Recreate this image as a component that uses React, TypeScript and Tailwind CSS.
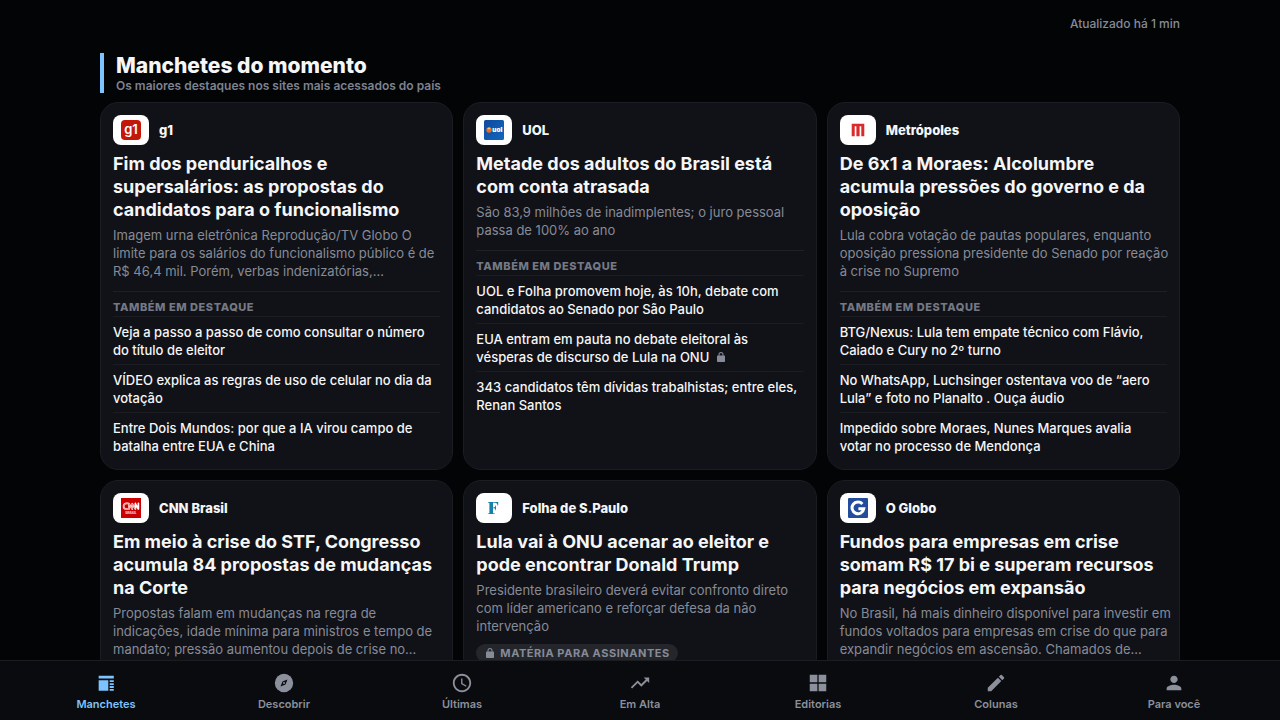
import type { ComponentType, ReactNode } from "react";
import { MdEdit, MdPerson, MdSchedule, MdTrendingUp } from "react-icons/md";

interface Headline {
  text: string;
  locked?: boolean;
}

interface Story {
  source: string;
  logo: ReactNode;
  title: string;
  summary: string;
  subscribersOnly?: boolean;
  related?: Headline[];
}

interface IconProps {
  className?: string;
}

function G1Logo() {
  return (
    <svg viewBox="0 0 20 20" className="size-5" aria-hidden="true">
      <rect width="20" height="20" rx="4" fill="#c4170c" />
      <text x="10" y="13.5" textAnchor="middle" fontFamily="Inter, sans-serif" fontSize="13" fontWeight="600" fill="#fff">
        g1
      </text>
    </svg>
  );
}

function UolLogo() {
  return (
    <svg viewBox="0 0 20 20" className="size-5" aria-hidden="true">
      <defs>
        <linearGradient id="uol-bg" x1="0" y1="0" x2="1" y2="1">
          <stop offset="0" stopColor="#0e4a9c" />
          <stop offset="1" stopColor="#1466bd" />
        </linearGradient>
      </defs>
      <rect width="20" height="20" rx="1.5" fill="url(#uol-bg)" />
      <circle cx="5" cy="10" r="2.7" fill="#ee6a24" />
      <path d="M3.2 9a2.7 2.7 0 0 1 3.4-1.1L5.4 9.6z" fill="#ffc178" />
      <text x="8.3" y="12.3" fontFamily="Inter, sans-serif" fontSize="6.4" fontWeight="900" fill="#fff">
        uol
      </text>
    </svg>
  );
}

function MetropolesLogo() {
  return (
    <svg viewBox="0 0 20 20" className="size-5" aria-hidden="true">
      <path d="M3.7 3.7h12.6v12.6h-3V6.2h-1.7v10.1H8.4V6.2H6.7v10.1h-3z" fill="#d92b2b" />
    </svg>
  );
}

function CnnLogo() {
  return (
    <svg viewBox="0 0 20 20" className="size-5" aria-hidden="true">
      <rect width="20" height="20" fill="#cc0000" />
      <g fill="none" strokeLinejoin="round" strokeLinecap="round">
        <path d="M7 5.4H5.4a2.8 2.8 0 0 0 0 5.6H8V5.6l3.2 5.4V5.6l3.2 5.4V5.4M17.4 5.4V11l-3-5" stroke="#fff" strokeWidth="1.7" />
        <path d="M7 5.4H5.4a2.8 2.8 0 0 0 0 5.6H8V5.6l3.2 5.4V5.6l3.2 5.4" stroke="#cc0000" strokeWidth=".4" />
      </g>
      <text x="10" y="16" textAnchor="middle" fontFamily="Inter, sans-serif" fontSize="3.2" fontWeight="600" fill="#fff">
        BRASIL
      </text>
    </svg>
  );
}

function FolhaLogo() {
  return (
    <svg viewBox="0 0 20 20" className="size-5" aria-hidden="true">
      <path d="M4 4h10.2v3.6h-.6c-.3-1.9-1-2.8-2.6-2.8H9v4.7h.7c1.1 0 1.6-.6 1.8-1.9h.5v4.6h-.5c-.2-1.4-.7-2-1.8-2H9v5l1.8.3v.6H4v-.6l1.4-.3V4.9L4 4.6z" fill="#1681a8" />
    </svg>
  );
}

function OGloboLogo() {
  return (
    <svg viewBox="0 0 20 20" className="size-5" aria-hidden="true">
      <rect width="20" height="20" rx="1" fill="#234c9c" />
      <path d="M14.4 5.9A5.9 5.9 0 1 0 15.8 10.8H10.4" fill="none" stroke="#fff" strokeWidth="3" />
    </svg>
  );
}

function HeadlinesIcon({ className }: IconProps) {
  return (
    <svg viewBox="0 0 24 24" fill="currentColor" className={className} aria-hidden="true">
      <path d="M4 4h16.5v3H4zM4 9h10.5v11.5H4zM16 9h4.5v2H16zM16 12.2h4.5v2H16zM16 15.4h4.5v2H16zM16 18.5h4.5v2H16z" />
    </svg>
  );
}

function CompassIcon({ className }: IconProps) {
  return (
    <svg viewBox="0 0 24 24" className={className} aria-hidden="true">
      <circle cx="12" cy="12" r="10" fill="currentColor" />
      <path d="M15.8 8.2l-2.2 5.4-5.4 2.2 2.2-5.4z" fill="#090b0e" />
      <circle cx="12" cy="12" r="1.1" fill="currentColor" />
    </svg>
  );
}

function SectionsIcon({ className }: IconProps) {
  return (
    <svg viewBox="0 0 24 24" fill="currentColor" className={className} aria-hidden="true">
      <path d="M3 3h8.3v8.3H3zM12.7 3H21v8.3h-8.3zM3 12.7h8.3V21H3zM12.7 12.7H21V21h-8.3z" />
    </svg>
  );
}

function LockIcon({ className }: IconProps) {
  return (
    <svg viewBox="0 0 24 24" fill="currentColor" className={className} aria-hidden="true">
      <path d="M18.5 9H17V7A5 5 0 0 0 7 7v2H5.5A1.5 1.5 0 0 0 4 10.5v10A1.5 1.5 0 0 0 5.5 22h13a1.5 1.5 0 0 0 1.5-1.5v-10A1.5 1.5 0 0 0 18.5 9zM9 9V7a3 3 0 0 1 6 0v2z" />
    </svg>
  );
}

const stories: Story[] = [
  {
    source: "g1",
    logo: <G1Logo />,
    title: "Fim dos penduricalhos e supersalários: as propostas do candidatos para o funcionalismo",
    summary:
      "Imagem urna eletrônica Reprodução/TV Globo O limite para os salários do funcionalismo público é de R$ 46,4 mil. Porém, verbas indenizatórias,...",
    related: [
      { text: "Veja a passo a passo de como consultar o número do título de eleitor" },
      { text: "VÍDEO explica as regras de uso de celular no dia da votação" },
      { text: "Entre Dois Mundos: por que a IA virou campo de batalha entre EUA e China" },
    ],
  },
  {
    source: "UOL",
    logo: <UolLogo />,
    title: "Metade dos adultos do Brasil está com conta atrasada",
    summary: "São 83,9 milhões de inadimplentes; o juro pessoal passa de 100% ao ano",
    related: [
      { text: "UOL e Folha promovem hoje, às 10h, debate com candidatos ao Senado por São Paulo" },
      { text: "EUA entram em pauta no debate eleitoral às vésperas de discurso de Lula na ONU", locked: true },
      { text: "343 candidatos têm dívidas trabalhistas; entre eles, Renan Santos" },
    ],
  },
  {
    source: "Metrópoles",
    logo: <MetropolesLogo />,
    title: "De 6x1 a Moraes: Alcolumbre acumula pressões do governo e da oposição",
    summary:
      "Lula cobra votação de pautas populares, enquanto oposição pressiona presidente do Senado por reação à crise no Supremo",
    related: [
      { text: "BTG/Nexus: Lula tem empate técnico com Flávio, Caiado e Cury no 2º turno" },
      { text: "No WhatsApp, Luchsinger ostentava voo de “aero Lula” e foto no Planalto . Ouça áudio" },
      { text: "Impedido sobre Moraes, Nunes Marques avalia votar no processo de Mendonça" },
    ],
  },
  {
    source: "CNN Brasil",
    logo: <CnnLogo />,
    title: "Em meio à crise do STF, Congresso acumula 84 propostas de mudanças na Corte",
    summary:
      "Propostas falam em mudanças na regra de indicações, idade mínima para ministros e tempo de mandato; pressão aumentou depois de crise no...",
  },
  {
    source: "Folha de S.Paulo",
    logo: <FolhaLogo />,
    title: "Lula vai à ONU acenar ao eleitor e pode encontrar Donald Trump",
    summary:
      "Presidente brasileiro deverá evitar confronto direto com líder americano e reforçar defesa da não intervenção",
    subscribersOnly: true,
  },
  {
    source: "O Globo",
    logo: <OGloboLogo />,
    title: "Fundos para empresas em crise somam R$ 17 bi e superam recursos para negócios em expansão",
    summary:
      "No Brasil, há mais dinheiro disponível para investir em fundos voltados para empresas em crise do que para expandir negócios em ascensão. Chamados de...",
  },
];

const tabs: { label: string; icon: ComponentType<IconProps> }[] = [
  { label: "Manchetes", icon: HeadlinesIcon },
  { label: "Descobrir", icon: CompassIcon },
  { label: "Últimas", icon: MdSchedule },
  { label: "Em Alta", icon: MdTrendingUp },
  { label: "Editorias", icon: SectionsIcon },
  { label: "Colunas", icon: MdEdit },
  { label: "Para você", icon: MdPerson },
];

function StoryCard({ story }: { story: Story }) {
  return (
    <article className="rounded-[18px] border border-[#1c1d22] bg-[#111217] p-3">
      <div className="flex items-center gap-2.5">
        <span className="flex h-[30px] w-9 items-center justify-center rounded-lg bg-white">{story.logo}</span>
        <span className="text-[13px] leading-5 font-extrabold text-[#f5f6f8]">{story.source}</span>
      </div>
      <h2 className="mt-[7px] text-[18px] leading-[23px] font-bold text-[#f5f6f8]">
        <a href="#">{story.title}</a>
      </h2>
      <p className="mt-[5px] -mr-1.5 text-[13px] leading-[18px] text-[#868b98]">{story.summary}</p>
      {story.subscribersOnly && (
        <span className="mt-[9px] flex w-fit items-center gap-1 rounded-full bg-[#24262b] px-2 text-[11px] leading-[18px] font-bold tracking-wider text-[#868b98] uppercase">
          <LockIcon className="size-3" />
          Matéria para assinantes
        </span>
      )}
      {story.related && (
        <div className="mt-[11px] border-t border-[#1e2026] pt-[7px]">
          <h3 className="text-[11px] leading-4 font-extrabold tracking-wider text-[#747985] uppercase">
            Também em destaque
          </h3>
          <ul className="mt-px">
            {story.related.map((item) => (
              <li key={item.text} className="border-t border-[#1b1d22] pt-1.5 pr-1 pb-[5px] last:pb-0.5">
                <a href="#" className="block text-[13px] leading-[18px] font-medium text-[#f5f6f8]">
                  {item.text}
                  {item.locked && <LockIcon className="ml-1.5 inline size-3 align-[-1px] text-[#868b98]" />}
                </a>
              </li>
            ))}
          </ul>
        </div>
      )}
    </article>
  );
}

export default function App() {
  return (
    <div className="min-h-screen bg-[#030406] pb-10 font-['Inter',sans-serif] text-[#f5f6f8] [font-feature-settings:'calt'_0]">
      <main className="mx-auto max-w-[1120px] px-5 pt-4">
        <p className="text-right text-[12px] leading-4 font-medium text-[#868b98]">Atualizado há 1 min</p>
        <header className="mt-[21px] border-l-4 border-[#7cc4ff] pl-3">
          <h1 className="text-[21px] leading-[25px] font-extrabold">Manchetes do momento</h1>
          <p className="text-[12px] leading-[15px] font-semibold text-[#7d828f]">
            Os maiores destaques nos sites mais acessados do país
          </p>
        </header>
        <section className="mt-[9px] grid grid-cols-1 gap-2.5 sm:grid-cols-2 lg:grid-cols-3">
          {stories.map((story) => (
            <StoryCard key={story.source} story={story} />
          ))}
        </section>
      </main>
      <nav className="fixed inset-x-0 bottom-0 border-t border-[#1b1d21] bg-[#090b0e] px-[17px] pt-[11px] pb-[9px]">
        <div className="grid grid-cols-7">
          {tabs.map(({ label, icon: Icon }, index) => (
            <button
              key={label}
              type="button"
              aria-current={index === 0 ? "page" : undefined}
              className="flex flex-col items-center gap-[3px] text-[11px] leading-[14px] font-semibold text-[#8b909c] aria-[current=page]:text-[#7cc4ff]"
            >
              <Icon className="size-[22px]" />
              {label}
            </button>
          ))}
        </div>
      </nav>
    </div>
  );
}
